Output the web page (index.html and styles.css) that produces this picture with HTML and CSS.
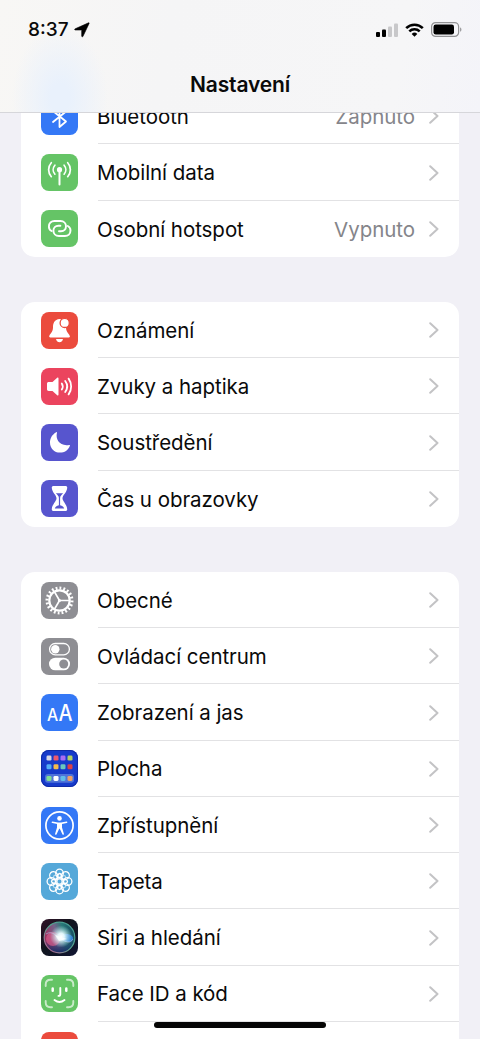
FILE: index.html
```html
<!DOCTYPE html>
<html lang="cs">
<head>
<meta charset="utf-8">
<meta name="viewport" content="width=device-width, initial-scale=1">
<title>Nastavení</title>
<link rel="stylesheet" href="styles.css">
</head>
<body>
<svg class="defs" width="0" height="0">
  <symbol id="chevron" viewBox="0 0 10 16"><path d="M1.2 1.2 8.5 8 1.2 14.8" fill="none" stroke="#c3c3c5" stroke-width="2" stroke-linecap="round" stroke-linejoin="round"/></symbol>
</svg>
<div class="screen">
  <header class="top">
    <div class="status">
      <div class="clock"><span class="time">8:37</span>
        <svg width="16" height="16" viewBox="0 0 16 16"><path stroke="#000" stroke-width=".6" d="M14.6.8 1.2 6.8C.3 7.2.6 8 1.3 8H7.3c.3 0 .4.1.4.4V14c0 1 .9 1.100 1.3.3L15.100 1.400C15.300.9 15 .6 14.600.8Z"/></svg>
      </div>
      <div class="indicators">
        <svg width="22" height="14" viewBox="0 0 22 14"><rect x="0" y="9" width="4" height="5" rx="1"/><rect x="6" y="6.500" width="4" height="7.500" rx="1"/><g fill="#c8c8ca"><rect x="12" y="3.500" width="4" height="10.500" rx="1"/><rect x="18" y="0.500" width="4" height="13.500" rx="1"/></g></svg>
        <svg width="19" height="14" viewBox="0 0 19 14"><g fill="none" stroke="#000" stroke-width="2.600"><path d="M1.200 5.200A11.800 11.800 0 0 1 17.800 5.200"/><path d="M4.300 8.400A7.500 7.500 0 0 1 14.700 8.400"/></g><path d="M9.500 13.700 6.700 10.900A4 4 0 0 1 12.300 10.900Z"/></svg>
        <svg width="31" height="15" viewBox="0 0 31 15"><rect x=".6" y=".6" width="27" height="13.800" rx="4" fill="none" stroke="#929294" stroke-width="1.200"/><rect x="2.500" y="2.500" width="20.500" height="10" rx="2.200"/><path d="M29.100 5.200c1.800.8 1.800 3.800 0 4.600Z" fill="#929294"/></svg>
      </div>
    </div>
    <h1 class="title">Nastavení</h1>
  </header>

  <main class="content">
    <section class="group">
      <div class="row"><span class="icon blue"><svg viewBox="0 0 37 37"><path d="M12 13 25 23.500 18.500 29V8L25 13.500 12 24" fill="none" stroke="#fff" stroke-width="1.800" stroke-linejoin="round" stroke-linecap="round"/></svg></span><div class="body"><span class="label">Bluetooth</span><span class="value">Zapnuto</span><svg class="chev"><use href="#chevron"/></svg></div></div>
      <div class="row"><span class="icon green"><svg viewBox="0 0 37 37"><circle cx="18.500" cy="15.700" r="2.600" fill="#fff"/><g fill="none" stroke="#fff" stroke-linecap="round" stroke-width="1.700"><path d="M18.500 16V30.500" stroke-width="2"/><path d="M13.900 11.200a6.800 6.800 0 0 0 0 9M10.300 8.700a10.500 10.500 0 0 0 0 14M23.100 11.200a6.800 6.800 0 0 1 0 9M26.700 8.700a10.500 10.500 0 0 1 0 14"/></g></svg></span><div class="body"><span class="label">Mobilní data</span><svg class="chev"><use href="#chevron"/></svg></div></div>
      <div class="row"><span class="icon green"><svg viewBox="0 0 37 37"><g fill="none" stroke="#fff" stroke-width="1.900" stroke-linecap="round"><path id="loop" d="M10.600 21C8.600 20 7.900 18.300 7.900 16.500 7.900 13.200 10.300 11 13.500 11H19.500C22.900 11 25 13.500 25 16.200 25 19 23 21.200 20 21.200H18"/><use href="#loop" transform="rotate(180 18.700 18.500)"/></g></svg></span><div class="body"><span class="label">Osobní hotspot</span><span class="value">Vypnuto</span><svg class="chev"><use href="#chevron"/></svg></div></div>
    </section>

    <section class="group">
      <div class="row"><span class="icon red"><svg viewBox="0 0 37 37"><path d="M18.500 7C13.500 7.500 12 11 12 15.500 12 20.500 8.200 22.100 8.200 24.600c0 .6.500.9 1.100.9H27.800c.6 0 1.100-.3 1.100-.9 0-2.500-3.900-4.100-3.900-9.100C25 10 23 7 18.500 7ZM15 27H22C21.500 29.300 20 30.300 18.500 30.300S15.500 29.300 15 27Z" fill="#fff"/><circle cx="23.700" cy="10.900" r="4.600" fill="#fff" stroke="#eb4b3d" stroke-width="1.300"/></svg></span><div class="body"><span class="label">Oznámení</span><svg class="chev"><use href="#chevron"/></svg></div></div>
      <div class="row"><span class="icon pink"><svg viewBox="0 0 37 37"><path d="M7.800 14H11.500L16.200 9.800C16.900 9.200 17.500 9.600 17.500 10.400V26.600C17.500 27.400 16.900 27.800 16.200 27.200L11.500 23H7.800C6.600 23 6 22.300 6 21.300V15.700C6 14.700 6.600 14 7.800 14Z" fill="#fff"/><path d="M20.800 15.500a5.500 5.500 0 0 1 0 6M24.200 13a9.300 9.300 0 0 1 0 11M27.600 10.600a13.500 13.500 0 0 1 0 15.800" fill="none" stroke="#fff" stroke-width="1.800" stroke-linecap="round"/></svg></span><div class="body"><span class="label">Zvuky a haptika</span><svg class="chev"><use href="#chevron"/></svg></div></div>
      <div class="row"><span class="icon indigo"><svg viewBox="0 0 37 37"><path d="M16 8.600C14.200 15.800 19 22.600 28.300 20.900 28.900 20.800 29.100 21.300 28.800 21.900 27.200 26 23.500 28.600 19 28.600 13.200 28.600 9 24.200 9 18.700 9 14.200 11.300 10.300 15.300 8.200 15.800 8 16.100 8.200 16 8.600Z" fill="#fff"/></svg></span><div class="body"><span class="label">Soustředění</span><svg class="chev"><use href="#chevron"/></svg></div></div>
      <div class="row"><span class="icon indigo"><svg viewBox="0 0 37 37"><path d="M12.300 6H24.700C26 6 26.300 7 26.200 8 25.900 12.500 21.500 15.200 21.500 18.300S25.900 24.500 26.200 29C26.300 30 26 31 24.700 31H12.300C11 31 10.700 30 10.800 29 11.100 24.500 15.500 21.400 15.500 18.300S11.100 12.500 10.800 8C10.700 7 11 6 12.300 6Z" fill="#fff"/><path d="M14.800 13.200H22.200C20.800 14.700 19.100 15.800 19.100 18V25.200C21.300 25.600 22.900 27 23.200 28.600H13.800C14.100 27 15.700 25.600 17.900 25.200V18C17.900 15.800 16.200 14.700 14.800 13.200Z" fill="#5755ce"/></svg></span><div class="body"><span class="label">Čas u obrazovky</span><svg class="chev"><use href="#chevron"/></svg></div></div>
    </section>

    <section class="group">
      <div class="row"><span class="icon gray"><svg viewBox="0 0 37 37"><g fill="none" stroke="#fff"><circle cx="18.500" cy="18.500" r="10.200" stroke-width="2.200"/><circle cx="18.500" cy="18.500" r="12.500" pathLength="60" stroke-width="3" stroke-dasharray="1.400 1.600"/><path d="M18.500 18.500H28.500M18.500 18.500 13.500 9.800M18.500 18.500 13.500 27.200" stroke-width="1.700"/></g><circle cx="18.500" cy="18.500" r="1.500" fill="#fff"/></svg></span><div class="body"><span class="label">Obecné</span><svg class="chev"><use href="#chevron"/></svg></div></div>
      <div class="row"><span class="icon gray"><svg viewBox="0 0 37 37"><rect x="8.600" y="5.500" width="19.800" height="11.300" rx="5.650" fill="none" stroke="#fff" stroke-width="1.300"/><circle cx="14.300" cy="11.200" r="4.200" fill="#fff"/><rect x="8" y="19.700" width="21" height="12.600" rx="6.300" fill="#fff"/><circle cx="22.700" cy="26" r="4.500" fill="#8e8e93"/></svg></span><div class="body"><span class="label">Ovládací centrum</span><svg class="chev"><use href="#chevron"/></svg></div></div>
      <div class="row"><span class="icon blue"><svg viewBox="0 0 37 37"><g class="aa"><text x="5.900" y="26.500" font-size="17" textLength="11.200" lengthAdjust="spacingAndGlyphs">A</text><text x="17.500" y="26.500" font-size="22.500" textLength="14" lengthAdjust="spacingAndGlyphs">A</text></g></svg></span><div class="body"><span class="label">Zobrazení a jas</span><svg class="chev"><use href="#chevron"/></svg></div></div>
      <div class="row"><span class="icon navy"><svg viewBox="0 0 37 37"><rect x="4" y="24" width="29" height="8.800" rx="3" fill="#4f73d8"/><g><rect x="5.500" y="5.600" width="5" height="5" rx="1.300" fill="#d5d6e5"/><rect x="12.500" y="5.600" width="5" height="5" rx="1.300" fill="#ee596d"/><rect x="19.500" y="5.600" width="5" height="5" rx="1.300" fill="#a96cf4"/><rect x="26.500" y="5.600" width="5" height="5" rx="1.300" fill="#b2d165"/><rect x="5.500" y="14.200" width="5" height="5" rx="1.300" fill="#55aff5"/><rect x="12.500" y="14.200" width="5" height="5" rx="1.300" fill="#f5bb4d"/><rect x="19.500" y="14.200" width="5" height="5" rx="1.300" fill="#6ac9bd"/><rect x="26.500" y="14.200" width="5" height="5" rx="1.300" fill="#dc4147"/><rect x="5.500" y="25.900" width="5" height="5" rx="1.300" fill="#82df91"/><rect x="12.500" y="25.900" width="5" height="5" rx="1.300" fill="#fff"/><rect x="19.500" y="25.900" width="5" height="5" rx="1.300" fill="#60bce9"/><rect x="26.500" y="25.900" width="5" height="5" rx="1.300" fill="#eea067"/></g></svg></span><div class="body"><span class="label">Plocha</span><svg class="chev"><use href="#chevron"/></svg></div></div>
      <div class="row"><span class="icon blue"><svg viewBox="0 0 37 37"><circle cx="18.500" cy="18.500" r="13.600" fill="none" stroke="#fff" stroke-width="1.700"/><circle cx="18.500" cy="11.400" r="2.300" fill="#fff"/><path d="M11.500 14.600 17 15.400H20L25.500 14.600C26.600 14.500 26.700 15.900 25.700 16.100L21 17V20.500L22.900 26.800C23.200 27.900 21.800 28.300 21.400 27.300L18.800 21.800H18.200L15.600 27.300C15.200 28.300 13.800 27.900 14.100 26.800L16 20.500V17L11.300 16.100C10.300 15.900 10.400 14.500 11.500 14.600Z" fill="#fff"/></svg></span><div class="body"><span class="label">Zpřístupnění</span><svg class="chev"><use href="#chevron"/></svg></div></div>
      <div class="row"><span class="icon cyan"><svg viewBox="0 0 37 37"><g fill="none" stroke="#fff" stroke-width="1.300"><g id="petals"><ellipse id="petal" cx="18.500" cy="10.300" rx="3.800" ry="4.200"/><use href="#petal" transform="rotate(90 18.500 18.500)"/><use href="#petal" transform="rotate(180 18.500 18.500)"/><use href="#petal" transform="rotate(270 18.500 18.500)"/></g><use href="#petals" transform="rotate(45 18.500 18.500)"/><g id="inner"><ellipse cx="18.500" cy="18.500" rx="2.600" ry="8"/><ellipse cx="18.500" cy="18.500" rx="8" ry="2.600"/></g><use href="#inner" transform="rotate(45 18.500 18.500)" opacity=".55"/></g><circle cx="18.500" cy="18.500" r="1.500" fill="#55a8d9"/></svg></span><div class="body"><span class="label">Tapeta</span><svg class="chev"><use href="#chevron"/></svg></div></div>
      <div class="row"><span class="icon siri"><svg viewBox="0 0 37 37"><defs>
        <linearGradient id="orb" x1="0" y1=".6" x2="1" y2=".4"><stop offset="0" stop-color="#a52857"/><stop offset=".4" stop-color="#75648b"/><stop offset=".65" stop-color="#297a78"/><stop offset="1" stop-color="#164b62"/></linearGradient>
        <radialGradient id="glow"><stop offset="0" stop-color="#fff"/><stop offset=".3" stop-color="#eafcff" stop-opacity=".95"/><stop offset="1" stop-color="#aee6ed" stop-opacity="0"/></radialGradient>
        <linearGradient id="ring" x1="0" y1="1" x2="1" y2="0"><stop stop-color="#c25392"/><stop offset=".5" stop-color="#58a58f"/><stop offset="1" stop-color="#3e9a93"/></linearGradient>
        <linearGradient id="low" x2="0" y2="1"><stop offset=".55" stop-color="#172b65" stop-opacity="0"/><stop offset="1" stop-color="#172b65"/></linearGradient></defs>
        <circle cx="18.500" cy="18.500" r="15.300" fill="url(#orb)"/><circle cx="18.500" cy="18.500" r="15.300" fill="url(#low)"/><circle cx="12" cy="20" r="7" fill="#df5c8c" opacity=".65"/><path d="M17 19C22 12 33 15 32 20 31 25 22 23 17 19Z" fill="#3688e3" opacity=".85"/><path d="M5 15C11 11 15 17 20 20S29 25 32 20" fill="none" stroke="#b8bfe8" opacity=".6"/><circle cx="20" cy="17.500" r="11" fill="url(#glow)"/><path d="m14 16 12 4-8 2Z" fill="#fff" opacity=".75"/><circle cx="18.500" cy="18.500" r="15.300" fill="none" stroke="url(#ring)" stroke-width="1.200"/></svg></span><div class="body"><span class="label">Siri a hledání</span><svg class="chev"><use href="#chevron"/></svg></div></div>
      <div class="row"><span class="icon green"><svg viewBox="0 0 37 37"><g fill="none" stroke="#fff" stroke-linecap="round" stroke-width="1.900"><path opacity=".65" d="M4.700 11V9.500Q4.700 4.800 9.500 4.800H11M26 4.800h1.500Q32.300 4.800 32.300 9.500V11M32.300 26v1.500Q32.300 32.200 27.500 32.200H26M11 32.200H9.500Q4.700 32.200 4.700 27.500V26"/><path d="M11.700 13.500v2.200M25.300 13.500v2.200" stroke-width="2.500"/><path d="M19.300 13V19.200Q19.300 20.800 17.500 20.900M13.500 25.100Q18.500 29 23.500 25.100"/></g></svg></span><div class="body"><span class="label">Face ID a kód</span><svg class="chev"><use href="#chevron"/></svg></div></div>
      <div class="row"><span class="icon red"></span><div class="body"></div></div>
    </section>
  </main>
  <div class="home"></div>
</div>
</body>
</html>
```
FILE: styles.css
```css
* { box-sizing: border-box; }
body { margin: 0; background: #f1f0f6; color: #0a0a0a; font-family: Inter, "Liberation Sans", sans-serif; }
svg { display: block; flex: none; }
.defs { position: absolute; }
.screen { position: relative; width: 480px; height: 1039px; overflow: hidden; }
.top {
  position: absolute; z-index: 2; top: 0; left: 0; width: 100%; height: 113px;
  border-bottom: 1px solid #d6d6da;
  background: radial-gradient(ellipse 48px 72px at 60px 98px, #e9f1fc 20%, rgba(233,241,252,0) 100%), linear-gradient(100deg, #f8f7f5 0, #f5f5f6 35%, #f6f6f7 82%, #f4f4f9 100%);
}
.status { display: flex; justify-content: space-between; height: 59px; padding: 0 18px 0 28px; align-items: center; }
.clock, .indicators { display: flex; align-items: center; }
.clock { gap: 5px; }
.time { font-size: 19px; font-weight: 500; letter-spacing: 0; }
.indicators { gap: 7px; }
.title { margin: 0; text-align: center; font-size: 21px; line-height: 26px; padding-top: 13px; font-weight: 600; letter-spacing: -.15px; }
.content { display: flex; flex-direction: column; gap: 45px; padding: 88.2px 21px 0; }
.group { background: #fff; border-radius: 14px; overflow: hidden; flex: none; }
.row { display: flex; height: 56.25px; padding-left: 20px; gap: 20px; align-items: center; }
.body { display: flex; flex: 1; align-self: stretch; align-items: center; padding-right: 20px; border-bottom: 1px solid #e2e2e4; }
.row:last-child .body { border-bottom: 0; }
.label { flex: 1; font-size: 20.5px; letter-spacing: -.05px; font-weight: 400; padding-top: 1px; margin-left: -1px; }
.value { color: #85858a; font-size: 20.5px; letter-spacing: -.05px; font-weight: 400; margin-right: 14px; padding-top: 1px; }
.chev { width: 10px; height: 16px; margin-top: 1px; }
.icon { width: 37px; height: 37px; border-radius: 8px; overflow: hidden; flex: none; }
.icon svg { width: 37px; height: 37px; }
.blue { background: #3478f6; }
.green { background: #65c466; }
.red { background: #eb4b3d; }
.pink { background: #eb445e; }
.indigo { background: #5755ce; }
.gray { background: #8e8e93; }
.navy { background: #173bcb; box-shadow: inset 0 0 0 1px #102ba8; }
.cyan { background: #55a8d9; }
.siri { background: linear-gradient(135deg, #301226, #10141e 45%, #111633); }
.aa { fill: #fff; font-weight: 500; }
.home { position: absolute; z-index: 3; left: 154px; top: 1022px; width: 172px; height: 6px; border-radius: 3px; background: #050505; }
```
